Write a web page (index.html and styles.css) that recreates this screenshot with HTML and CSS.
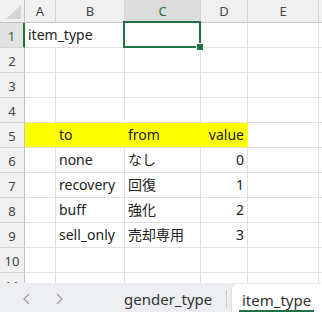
FILE: index.html
```html
<!DOCTYPE html>
<html lang="ja">
<head>
<meta charset="utf-8">
<link rel="stylesheet" href="styles.css">
</head>
<body>
<div class="app">
  <div class="sheet">
    <div class="h corner"><svg width="24" height="22" viewBox="0 0 24 22"><polygon points="21,5 21,19 6,19" fill="#d6d6d6"/></svg></div>
    <div class="h">A</div>
    <div class="h">B</div>
    <div class="h hsel">C</div>
    <div class="h">D</div>
    <div class="h">E</div>
    <div class="h"></div>

    <div class="r rsel">1</div>
    <div class="c over">item_type</div>
    <div class="c"></div>
    <div class="c cur"><span class="selbox"><span class="handle"></span></span></div>
    <div class="c"></div>
    <div class="c"></div>
    <div class="c"></div>

    <div class="r">2</div><div class="c"></div><div class="c"></div><div class="c"></div><div class="c"></div><div class="c"></div><div class="c"></div>
    <div class="r">3</div><div class="c"></div><div class="c"></div><div class="c"></div><div class="c"></div><div class="c"></div><div class="c"></div>
    <div class="r">4</div><div class="c"></div><div class="c"></div><div class="c"></div><div class="c"></div><div class="c"></div><div class="c"></div>

    <div class="r">5</div>
    <div class="c y"></div>
    <div class="c y">to</div>
    <div class="c y">from</div>
    <div class="c y num">value</div>
    <div class="c"></div>
    <div class="c"></div>

    <div class="r">6</div><div class="c"></div><div class="c">none</div><div class="c">なし</div><div class="c num">0</div><div class="c"></div><div class="c"></div>
    <div class="r">7</div><div class="c"></div><div class="c">recovery</div><div class="c">回復</div><div class="c num">1</div><div class="c"></div><div class="c"></div>
    <div class="r">8</div><div class="c"></div><div class="c">buff</div><div class="c">強化</div><div class="c num">2</div><div class="c"></div><div class="c"></div>
    <div class="r">9</div><div class="c"></div><div class="c">sell_only</div><div class="c">売却専用</div><div class="c num">3</div><div class="c"></div><div class="c"></div>
    <div class="r">10</div><div class="c"></div><div class="c"></div><div class="c"></div><div class="c"></div><div class="c"></div><div class="c"></div>
    <div class="r">11</div><div class="c"></div><div class="c"></div><div class="c"></div><div class="c"></div><div class="c"></div><div class="c"></div>
  </div>

  <div class="tabbar">
    <div class="navs">
      <svg class="nav" width="10" height="12" viewBox="0 0 10 12"><polyline points="7,1 2,6 7,11" fill="none" stroke="#9a9a9a" stroke-width="1.2"/></svg>
      <svg class="nav" width="10" height="12" viewBox="0 0 10 12"><polyline points="3,1 8,6 3,11" fill="none" stroke="#9a9a9a" stroke-width="1.2"/></svg>
    </div>
    <div class="tab first">gender_type</div>
    <div class="sep"></div>
    <div class="tab active"><span class="label">item_type</span></div>
  </div>
</div>
</body>
</html>
```

FILE: styles.css
```css
html, body {
  margin: 0;
  padding: 0;
  background: #ffffff;
  overflow: hidden;
}

.app {
  width: 322px;
  height: 312px;
  display: flex;
  flex-direction: column;
  font-family: "Noto Sans", "Noto Sans CJK JP", sans-serif;
}

.sheet {
  height: 283px;
  overflow: hidden;
  display: grid;
  grid-template-columns: 25px 31px 69px 76px 47px 71px 1fr;
  grid-template-rows: 23px repeat(11, 25px);
}

.h {
  box-sizing: border-box;
  background: #f0f0f0;
  border-right: 1px solid #d4d4d4;
  border-bottom: 1px solid #c2c2c2;
  display: flex;
  align-items: center;
  justify-content: center;
  font-size: 13px;
  color: #444444;
}

.corner {
  border-right: 1px solid #c2c2c2;
}

.hsel {
  background: #dcdcdc;
  color: #217346;
}

.r {
  box-sizing: border-box;
  background: #f0f0f0;
  border-right: 1px solid #c2c2c2;
  border-bottom: 1px solid #d4d4d4;
  display: flex;
  align-items: center;
  justify-content: center;
  font-size: 13px;
  color: #444444;
  padding-top: 1px;
}

.rsel {
  background: #e2e2e2;
  color: #217346;
  border-right: 2px solid #217346;
}

.c {
  box-sizing: border-box;
  border-right: 1px solid #e1e1e1;
  border-bottom: 1px solid #e1e1e1;
  display: flex;
  align-items: flex-end;
  padding: 0 3px 3px 3px;
  font-size: 14px;
  line-height: 18px;
  color: #222222;
  white-space: nowrap;
  min-width: 0;
}

.over {
  overflow: visible;
  border-right-color: transparent;
  position: relative;
  z-index: 1;
}

.y {
  background: #ffff00;
  border-right-color: #ffff00;
}

.num {
  justify-content: flex-end;
}

.cur {
  position: relative;
}

.selbox {
  position: absolute;
  left: -2px;
  top: -2px;
  right: -1px;
  bottom: -1px;
  border: 2px solid #217346;
  z-index: 2;
}

.handle {
  position: absolute;
  right: -5px;
  bottom: -5px;
  width: 6px;
  height: 6px;
  background: #217346;
  border: 1px solid #ffffff;
}

.tabbar {
  flex: 1;
  background: #eceef1;
  display: flex;
  align-items: stretch;
}

.navs {
  width: 96px;
  flex: none;
  display: flex;
  align-items: center;
  gap: 22px;
  padding-left: 22px;
  padding-top: 2px;
  box-sizing: border-box;
}

.tab {
  display: flex;
  align-items: center;
  padding-top: 3px;
  font-size: 15px;
  color: #333333;
  box-sizing: border-box;
}

.first {
  flex: none;
  padding-left: 28px;
  width: 130px;
}

.sep {
  flex: none;
  width: 1px;
  background: #c8c8c8;
  margin: 7px 0 4px 0;
}

.active {
  flex: 1;
  margin-left: 5px;
  margin-top: 1px;
  background: #ffffff;
  border-top-left-radius: 5px;
  padding-left: 7px;
  box-shadow: -1px 0 2px rgba(0,0,0,0.08);
}

.label {
  display: inline-block;
  padding: 0 3px;
  border-bottom: 2px solid #217346;
  line-height: 20px;
  margin-top: 2px;
}
```
